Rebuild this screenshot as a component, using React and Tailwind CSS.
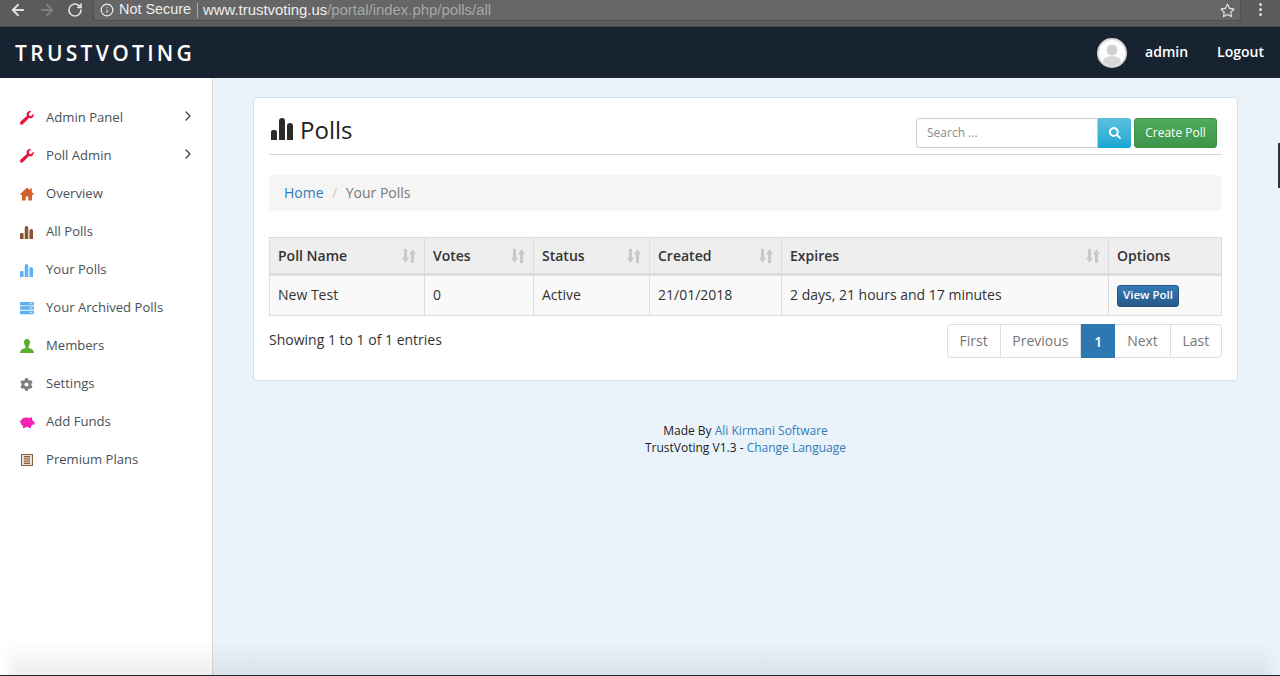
import { FaServer, FaCog, FaSearch, FaRegStar } from 'react-icons/fa'
import { ArrowLeft, ArrowRight, RotateCw, Info, ChevronRight } from 'lucide-react'

const Bars = ({ className }) => (
  <svg viewBox="0 0 22 22" className={className} fill="currentColor">
    <path d="M0 14a2 2 0 0 1 2-2h2a2 2 0 0 1 2 2v8H0zM8 3a3 3 0 0 1 6 0v19H8zM16 8a3 3 0 0 1 6 0v14h-6z" />
  </svg>
)

const Wrench = ({ className }) => (
  <svg viewBox="0 0 14 14" className={className} fill="currentColor">
    <path d="M13.6 2.6 11.3 5 9.2 4.7 8.9 2.6 11.3.3C9.6-.3 7.7.3 7 1.8c-.5 1-.5 2 0 3L.6 10.6c-.8.8-.8 1.9-.1 2.6.7.7 1.8.7 2.6-.1L9 6.900c1.100.500 2.200.400 3.200-.2 1.400-.9 1.900-2.600 1.400-4.100z" />
  </svg>
)

const House = ({ className }) => (
  <svg viewBox="0 0 14 14" className={className} fill="currentColor">
    <path d="M7 .6 0 7.200 1 8.300 2 7.400V13.600H5.700V9.400H8.300V13.600H12V7.400L13 8.300 14 7.200 11.800 5.100V1.400H9.900V3.300z" />
  </svg>
)

const Person = ({ className }) => (
  <svg viewBox="0 0 14 14" className={className} fill="currentColor">
    <path d="M7 0C4.900 0 4 1.400 4 3.100 4 5 4.800 6.600 5.500 7.400V9C4 9.800 1 10 .4 12.200L0 14H14L13.600 12.200C13 10 10 9.800 8.500 9V7.400C9.200 6.600 10 5 10 3.100 10 1.400 9.100 0 7 0z" />
  </svg>
)

const Pig = ({ className }) => (
  <svg viewBox="0 0 16 12" className={className} fill="currentColor">
    <path d="M0 3.400c0 1 .8 1.700 1.800 1.700C2 3 4.500 1.400 7.500 1.400c1.300 0 2.400.3 3.300.8L12.900.8l.1 2.900c.6.500 1 1.100 1.200 1.700h1.300v3h-1.700c-.4.600-1 1.100-1.700 1.500V12H9.700v-1.100c-1.200.2-2.200.2-3.400 0V12H4v-1.900C2.500 9.200 1.600 7.700 1.600 6.100 .6 6 0 5.200-.2 4.200z" />
  </svg>
)

const Plans = ({ className }) => (
  <svg viewBox="0 0 12 12" className={className}>
    <rect width="12" height="12" fill="#8a5a3a" />
    <rect x="1" y="1" width="10" height="10" fill="#e9e2da" />
    <path d="M3 2.500h6M3 4.200h6M3 6h6M3 7.800h6M3 9.500h6" stroke="#8a5a3a" strokeWidth="1" />
  </svg>
)

const SortIcon = () => (
  <svg viewBox="0 0 14 14" className="w-[14px] h-[14px] text-[#c9c9c9]" fill="currentColor">
    <path d="M2 0h3v8.500h2L3.500 14 0 8.500h2zM9 14h3V5.500h2L10.500 0 7 5.500h2z" />
  </svg>
)

const navItems = [
  { label: 'Admin Panel', icon: <Wrench className="w-[14px] h-[14px] text-[#e8173f]" />, arrow: true },
  { label: 'Poll Admin', icon: <Wrench className="w-[14px] h-[14px] text-[#e8173f]" />, arrow: true },
  { label: 'Overview', icon: <House className="w-[14px] h-[14px] text-[#d2602c]" /> },
  { label: 'All Polls', icon: <Bars className="w-[13px] h-[13px] text-[#8a5433]" /> },
  { label: 'Your Polls', icon: <Bars className="w-[13px] h-[13px] text-[#5eb0f5]" /> },
  { label: 'Your Archived Polls', icon: <FaServer className="w-[14px] h-[14px] text-[#5eb0f5]" /> },
  { label: 'Members', icon: <Person className="w-[14px] h-[14px] text-[#58ad2e]" /> },
  { label: 'Settings', icon: <FaCog className="w-[13px] h-[13px] text-[#7c7c7c]" /> },
  { label: 'Add Funds', icon: <Pig className="w-[16px] h-[12px] -ml-px text-[#f71fb4]" /> },
  { label: 'Premium Plans', icon: <Plans className="w-[12px] h-[12px] ml-px" /> },
]

const columns = [
  { name: 'Poll Name', width: 'w-[155px]', value: 'New Test' },
  { name: 'Votes', width: 'w-[109px]', value: '0' },
  { name: 'Status', width: 'w-[116px]', value: 'Active' },
  { name: 'Created', width: 'w-[132px]', value: '21/01/2018' },
  { name: 'Expires', width: 'w-[327px]', value: '2 days, 21 hours and 17 minutes' },
]

const pages = ['First', 'Previous', '1', 'Next', 'Last']

const App = () => {
  return (
    <div className="relative h-[676px] w-[1280px] overflow-hidden flex flex-col bg-[#eaf2fa] font-['Open_Sans',sans-serif] text-[14px] text-[#333]">
      {/* browser bar */}
      <div className="h-[27px] shrink-0 flex bg-[#5b5b5b] border-b border-[#4a4a4a] font-['Liberation_Sans',sans-serif]">
        <div className="w-[93px] flex items-center pl-[9px] gap-[11px] pb-[6px]">
          <ArrowLeft className="w-[18px] h-[18px] text-[#e0e0e0]" strokeWidth={2.500} />
          <ArrowRight className="w-[18px] h-[18px] text-[#808080]" strokeWidth={2.500} />
          <RotateCw className="w-[16px] h-[16px] text-[#e0e0e0]" strokeWidth={2.500} />
        </div>
        <div className="w-[1148px] h-[21px] bg-[#666] rounded-b-[4px] border-b border-l border-r border-[#4e4e4e] flex items-center pl-[6px]">
          <Info className="w-[14px] h-[14px] text-[#eee]" />
          <span className="ml-[5px] text-[14.4px] text-[#eee]">Not Secure</span>
          <span className="w-px h-[15px] bg-[#aaa] mx-[5.500px]" />
          <span className="text-[14.9px] text-[#eee]">www.trustvoting.us</span>
          <span className="text-[14.9px] text-[#a8a8a8]">/portal/index.php/polls/all</span>
          <FaRegStar className="ml-auto mr-[5px] w-[15px] h-[15px] text-[#ddd]" />
        </div>
        <div className="flex-1 flex flex-col items-center gap-[2px] pt-[3px]">
          <span className="w-[3px] h-[3px] rounded-full bg-[#ddd]" />
          <span className="w-[3px] h-[3px] rounded-full bg-[#ddd]" />
          <span className="w-[3px] h-[3px] rounded-full bg-[#ddd]" />
        </div>
      </div>

      {/* header */}
      <header className="h-[51px] shrink-0 bg-[#182331] flex items-center text-white">
        <div className="pl-[15px] pt-[2px] text-[21px] tracking-[3.3px] font-semibold">TRUSTVOTING</div>
        <div className="ml-auto flex items-center pr-[16px]">
          <div className="w-[30px] h-[30px] rounded-full bg-white border-2 border-[#d8d8d8] overflow-hidden">
            <svg viewBox="0 0 26 26" className="w-full h-full">
              <circle cx="13" cy="10" r="5.500" fill="#d0d0d0" />
              <ellipse cx="13" cy="21" rx="9" ry="5" fill="#d8d8d8" />
            </svg>
          </div>
          <span className="ml-[18px] mb-[2px] font-semibold">admin</span>
          <span className="ml-[29px] mb-[2px] font-semibold">Logout</span>
        </div>
      </header>

      <div className="flex-1 flex min-h-0">
        {/* sidebar */}
        <aside className="w-[213px] shrink-0 bg-white border-r border-[#d5dde6] pt-[21px]">
          {navItems.map((item) => (
            <div key={item.label} className="h-[38px] flex items-center text-[13.1px] text-[#4a5058]">
              <div className="w-[46px] pl-[20px] flex items-center">{item.icon}</div>
              <span>{item.label}</span>
              {item.arrow && <ChevronRight className="ml-auto mr-[16px] mb-[4px] w-[16px] h-[16px] text-[#444]" />}
            </div>
          ))}
        </aside>

        {/* main */}
        <main className="flex-1 pl-[40px] pr-[42px] pt-[19px]">
          <div className="h-[284px] bg-white border border-[#d6e0ea] rounded-[4px] px-[15px]">
            <div className="h-[57px] flex items-center border-b border-[#d4d4d4] pt-[8px] pb-[4px]">
              <Bars className="w-[22px] h-[22px] ml-[2px] mt-[2px] text-[#2b2b2b]" />
              <h1 className="ml-[7px] mt-[4px] text-[24px] text-[#222]">Polls</h1>
              <div className="ml-auto mt-[10px] flex items-center mr-[5px]">
                <div className="w-[182px] h-[30px] border border-[#ccc] rounded-l-[3px] pl-[10px] flex items-center text-[12px] text-[#8a8a8a]">
                  Search ...
                </div>
                <div className="w-[33px] h-[30px] rounded-r-[3px] bg-gradient-to-b from-[#5bc0de] to-[#10a8d2] flex items-center justify-center">
                  <FaSearch className="w-[12px] h-[12px] text-white" />
                </div>
                <div className="ml-[3px] w-[83px] h-[30px] rounded-[3px] border border-[#3e8f3e] bg-gradient-to-b from-[#4fac5f] to-[#3d9549] flex items-center justify-center text-[12px] font-medium text-white">
                  Create Poll
                </div>
              </div>
            </div>

            <div className="mt-[20px] h-[36px] bg-[#f5f5f5] rounded-[4px] flex items-center px-[15px] pb-[2px]">
              <span className="text-[#337ab7]">Home</span>
              <span className="mx-[8.500px] text-[#ccc]">/</span>
              <span className="text-[#777]">Your Polls</span>
            </div>

            <div className="mt-[26px] flex border border-[#ddd] text-[14px] text-[#333]">
              {columns.map((col) => (
                <div key={col.name} className={`${col.width} shrink-0 border-r border-[#ddd]`}>
                  <div className="h-[38px] bg-[#eeeeee] border-b-[3px] border-[#ddd] flex items-center pl-[8px] pr-[8px] font-semibold">
                    <span>{col.name}</span>
                    <span className="ml-auto"><SortIcon /></span>
                  </div>
                  <div className="h-[39px] pb-[2px] bg-[#f9f9f9] flex items-center pl-[8px]">{col.value}</div>
                </div>
              ))}
              <div className="flex-1">
                <div className="h-[38px] bg-[#eeeeee] border-b-[3px] border-[#ddd] flex items-center pl-[8px] font-semibold">Options</div>
                <div className="h-[39px] bg-[#f9f9f9] flex items-center pl-[8px]">
                  <span className="w-[62px] h-[22px] pb-px rounded-[3px] border border-[#245580] bg-gradient-to-b from-[#337ab7] to-[#265a88] flex items-center justify-center text-[11.500px] font-semibold text-white">
                    View Poll
                  </span>
                </div>
              </div>
            </div>

            <div className="flex mt-[8px]">
              <span className="pt-[5px] text-[#333]">Showing 1 to 1 of 1 entries</span>
              <div className="ml-auto h-[34px] pb-px flex border border-[#ddd] rounded-[4px] text-[#777]">
                {pages.map((p) =>
                  p === '1' ? (
                    <span key={p} className="w-[34px] -my-px -mb-[2px] bg-[#2e78b2] text-white font-semibold flex items-center justify-center">{p}</span>
                  ) : (
                    <span key={p} className="px-[11.800px] flex items-center border-r last:border-r-0 border-[#ddd]">{p}</span>
                  )
                )}
              </div>
            </div>
          </div>

          <div className="mt-[41px] text-center text-[12px] leading-[17px] text-[#222]">
            <div>Made By <span className="text-[#337ab7]">Ali Kirmani Software</span></div>
            <div>TrustVoting V1.3 - <span className="text-[#337ab7]">Change Language</span></div>
          </div>
        </main>
      </div>

      {/* window edge */}
      <div className="absolute right-0 top-[143px] w-[2px] h-[45px] bg-[#333]" />
      <div className="absolute left-0 right-0 bottom-0 h-[35px] bg-gradient-to-b from-transparent to-[#00000012] pointer-events-none" />
      <div className="absolute left-0 bottom-0 w-[18px] h-[35px] bg-gradient-to-r from-white to-transparent pointer-events-none" />
      <div className="absolute right-0 bottom-0 w-[18px] h-[35px] bg-gradient-to-l from-[#eaf2fa] to-transparent pointer-events-none" />
      <div className="absolute left-0 right-0 bottom-0 h-px bg-[#222]" />
    </div>
  )
}

export default App
